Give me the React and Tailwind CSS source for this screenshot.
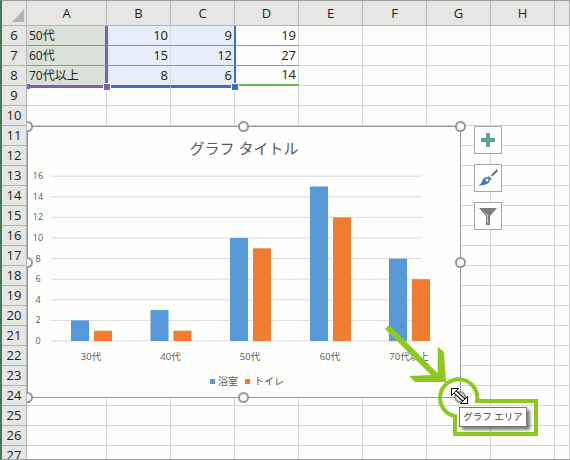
import React from 'react';

const columns = ['A', 'B', 'C', 'D', 'E', 'F', 'G', 'H', ''];
const rowNumbers = Array.from({ length: 22 }, (_, i) => i + 6);

const tableData = {
    6: ['50代', 10, 9, 19],
    7: ['60代', 15, 12, 27],
    8: ['70代以上', 8, 6, 14],
};

const chartData = [
    { label: '30代', x: 71, blue: 2, orange: 1 },
    { label: '40代', x: 150.5, blue: 3, orange: 1 },
    { label: '50代', x: 230, blue: 10, orange: 9 },
    { label: '60代', x: 310, blue: 15, orange: 12 },
    { label: '70代以上', x: 389, blue: 8, orange: 6 },
];

const handles = [
    'left-[22px] top-[121px]',
    'left-[238px] top-[121px]',
    'left-[455px] top-[121px]',
    'left-[22px] top-[257px]',
    'left-[455px] top-[257px]',
    'left-[22px] top-[392px]',
    'left-[238px] top-[392px]',
    'left-[455px] top-[392px]',
];

const yFor = (value) => 341 - value * 10.3;

// Cell borders carry the coloured data range outlines
function cellClass(row, col) {
    if (row >= 6 && row <= 8) {
        if (col === 0) {
            return `bg-[#d9e1d8] border-r-2 border-r-[#7f5fb5] ${row === 8 ? 'border-b-[#7f5fb5]' : 'border-b-[#7cab63]'}`;
        }
        if (col === 1) {
            return `bg-[#e7eef9] border-l border-l-[#7f5fb5] border-r-[#d6dee9] ${row === 8 ? 'border-b-[#3a70c4]' : 'border-b-[#7cab63]'}`;
        }
        if (col === 2) {
            return `bg-[#e7eef9] border-r-[#3a70c4] ${row === 8 ? 'border-b-[#3a70c4]' : 'border-b-[#7cab63]'}`;
        }
        if (col === 3) {
            return `border-l border-l-[#3a70c4] border-r-[#d4d4d4] ${row === 8 ? 'border-b-2 border-b-[#70ad47]' : 'border-b-[#7cab63]'}`;
        }
    }
    if (row === 9) {
        if (col === 0) return 'border-t-2 border-t-[#7f5fb5] border-r-[#d4d4d4] border-b-[#d4d4d4]';
        if (col === 1 || col === 2) return 'border-t-2 border-t-[#3a70c4] border-r-[#d4d4d4] border-b-[#d4d4d4]';
    }
    return 'border-r-[#d4d4d4] border-b-[#d4d4d4]';
}

const Chart = () => (
    <div className="absolute left-[27px] top-[126px] w-[434px] h-[272px] bg-[#fefefd] border border-[#979797]">
        <svg className="absolute left-[-28px] top-[-127px]" width="480" height="410" viewBox="0 0 480 410">
            {[0, 2, 4, 6, 8, 10, 12, 14, 16].map((tick) => (
                <g key={tick}>
                    <line x1="51" x2="422" y1={yFor(tick)} y2={yFor(tick)} stroke="#d9d9d9" strokeWidth="1" />
                    <text x="38" y={yFor(tick) + 3} textAnchor="middle" fontSize="9" fill="#595959">{tick}</text>
                </g>
            ))}
            {chartData.map((d) => (
                <g key={d.label}>
                    <rect x={d.x} y={yFor(d.blue)} width="18" height={d.blue * 10.3} fill="#5799d8" />
                    <rect x={d.x + 23} y={yFor(d.orange)} width="18" height={d.orange * 10.3} fill="#f07d2f" />
                    <text x={d.x + 20} y="360" textAnchor="middle" fontSize="9.5" fill="#595959">{d.label}</text>
                </g>
            ))}
        </svg>
        <div className="absolute left-0 right-0 top-[9px] text-center text-[15px] leading-[24px] text-[#595959]">グラフ タイトル</div>
        <div className="absolute left-[182px] top-[247px] flex items-center text-[10px] leading-[14px] text-[#595959]">
            <span className="w-[5px] h-[5px] bg-[#5799d8] mr-[3px]"></span>
            <span className="mr-[7px]">浴室</span>
            <span className="w-[5px] h-[5px] bg-[#f07d2f] mr-[4px]"></span>
            <span>トイレ</span>
        </div>
    </div>
);

const SideButton = ({ children }) => (
    <div className="w-[28px] h-[28px] bg-white border border-[#a6a6a6] flex items-center justify-center">
        {children}
    </div>
);

const App = () => {
    return (
        <div className="relative w-[570px] h-[460px] overflow-hidden bg-[#fefefc] font-['Open_Sans','Noto_Sans_CJK_JP',sans-serif] text-[#222]">
            {/* Sheet grid */}
            <div className="border-t border-b border-[#9c9c9c] border-l-2 border-l-[#3f7a5a] h-[460px] overflow-hidden">
                <div className="flex h-[25px]">
                    <div className="relative z-20 w-[25px] shrink-0 bg-[#e6e7e5] border-r border-b border-[#b4b4b4]">
                        <svg className="absolute left-[10px] top-[8px]" width="13" height="14" viewBox="0 0 13 14">
                            <polygon points="12,0 12,13 0,13" fill="#b4b5b3" />
                        </svg>
                    </div>
                    {columns.map((col, i) => (
                        <div
                            key={col || 'end'}
                            className={`${i === 0 ? 'w-[80px]' : i === 8 ? 'w-[15px]' : 'w-[64px]'} shrink-0 bg-[#e6e7e5] border-r border-b border-[#b4b4b4] flex items-center justify-center text-[13px] pt-[1px]`}
                        >
                            {col}
                        </div>
                    ))}
                </div>
                {rowNumbers.map((row) => {
                    const rowData = tableData[row] || [];
                    return (
                        <div key={row} className="flex h-[20px]">
                            <div className="relative z-20 w-[25px] shrink-0 bg-[#e6e7e5] border-r border-b border-[#b4b4b4] flex items-center justify-center text-[13px]">
                                {row}
                            </div>
                            {columns.map((col, i) => (
                                <div
                                    key={col || 'end'}
                                    className={`${i === 0 ? 'w-[80px] pl-[2px] text-[12px]' : i === 8 ? 'w-[15px]' : 'w-[64px] justify-end pr-[2px] text-[13px]'} shrink-0 flex items-center border-r border-b whitespace-nowrap ${cellClass(row, i)}`}
                                >
                                    {rowData[i]}
                                </div>
                            ))}
                        </div>
                    );
                })}
            </div>

            {/* Range corner markers */}
            <div className="absolute left-[27px] top-[84px] w-[3px] h-[5px] bg-[#7f5fb5]"></div>
            <div className="absolute left-[104px] top-[84px] w-[6px] h-[6px] bg-[#7f5fb5] outline outline-white"></div>
            <div className="absolute left-[232px] top-[84px] w-[6px] h-[6px] bg-[#3a70c4] outline outline-white"></div>

            <Chart />

            {/* Chart handles */}
            {handles.map((pos) => (
                <div key={pos} className={`absolute ${pos} w-[11px] h-[11px] rounded-full bg-white border-2 border-[#979797] z-10`}></div>
            ))}

            {/* Chart side buttons */}
            <div className="absolute left-[474px] top-[126px] flex flex-col gap-[10px]">
                <SideButton>
                    <svg width="16" height="16" viewBox="0 0 16 16">
                        <path d="M6 1h4v5h5v4h-5v5H6v-5H1V6h5z" fill="#5da58b" />
                    </svg>
                </SideButton>
                <SideButton>
                    <svg width="20" height="20" viewBox="0 0 20 20">
                        <path d="M19 1l-6 6 1.500 1.500L20 3z" fill="#707070" />
                        <path d="M11 8l3 3-1.500 1.500-3-3z" fill="#8a8a8a" />
                        <path d="M9 9c2.500 0 3.500 2.500 2.500 4.500C10.500 16 6 17.500 0 17.500c3-1 3.500-3 4.500-5 .8-2 2.500-3.500 4.500-3.500z" fill="#3f78bd" />
                        <circle cx="9" cy="12" r="1.500" fill="#fff" />
                    </svg>
                </SideButton>
                <SideButton>
                    <svg width="20" height="20" viewBox="0 0 20 20">
                        <path d="M1 2h18l-7 8v9H8v-9z" fill="#7a7a7a" />
                        <path d="M4.500 3.500l4.500 6v7.500h2v-1H10V9z" fill="#c9c9c9" />
                    </svg>
                </SideButton>
            </div>

            {/* Tooltip */}
            <div className="absolute left-[459px] top-[407px] w-[68px] h-[20px] z-30 bg-white border border-[#767676] shadow-[3px_3px_3px_rgba(0,0,0,0.5)] flex items-center justify-center whitespace-nowrap text-[9.5px] text-[#444]">
                グラフ エリア
            </div>

            {/* Annotation arrow and highlight */}
            <svg className="absolute left-0 top-0 z-20" width="570" height="460" viewBox="0 0 570 460">
                <polygon points="385,329 389,325 437.700,373.300 437.700,346.700 444,352 446,382 415,382 409,376 431,375" fill="#8dc821" />
                <path d="M536 401H477A18.600 18.600 0 1 0 455 416.200V434H536Z" fill="none" stroke="#8dc821" strokeWidth="4" />
            </svg>
            <svg className="absolute left-0 top-0 z-40" width="570" height="460" viewBox="0 0 570 460">
                <circle cx="460" cy="397" r="5" fill="#ddd" stroke="#979797" strokeWidth="2" />
                <line x1="454" y1="391" x2="465" y2="401" stroke="#000" strokeWidth="4" />
                <line x1="454" y1="391" x2="465" y2="401" stroke="#fff" strokeWidth="2" />
                <polygon points="451.500,388.500 458.500,388.500 451.500,395.500" fill="#fff" stroke="#000" strokeWidth="1" />
                <polygon points="467.500,403.500 460.500,403.500 467.500,396.500" fill="#fff" stroke="#000" strokeWidth="1" />
            </svg>
        </div>
    );
};

export default App;
